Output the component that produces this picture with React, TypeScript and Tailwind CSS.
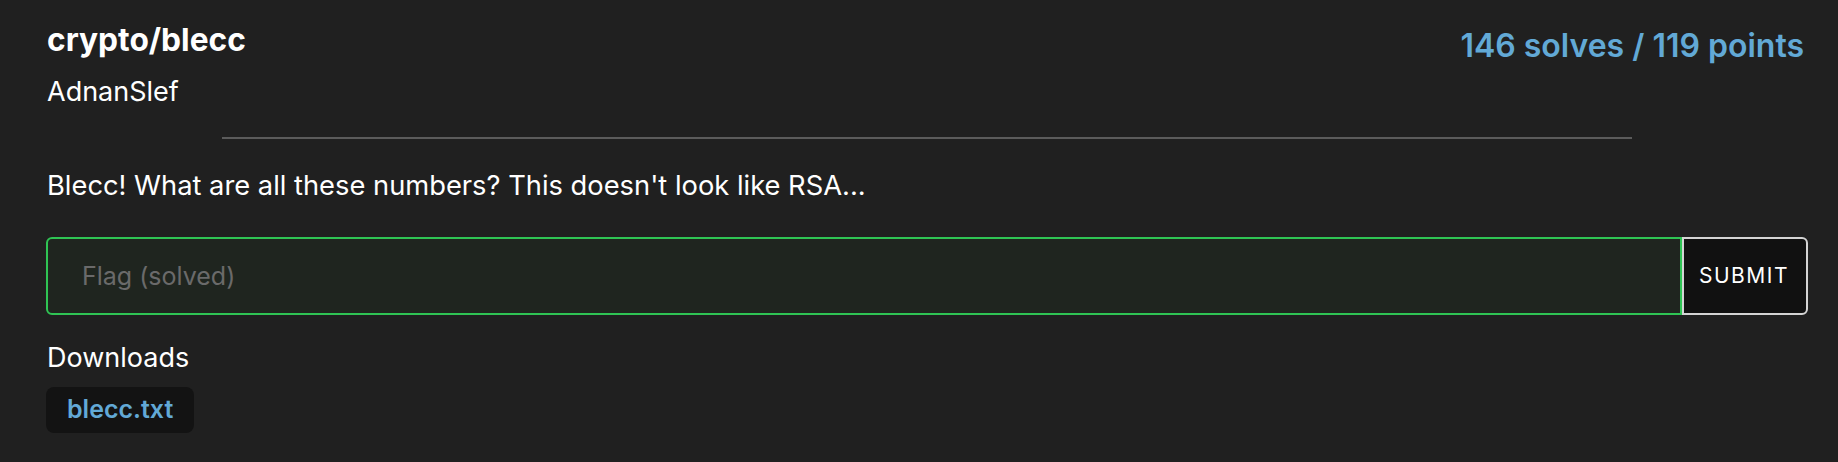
import React from "react";

export default function App() {
  return (
    <div className="min-h-screen w-full bg-[#202020] pl-[46px] pr-[30px] pt-[22px] font-['Inter','Noto_Sans',sans-serif] text-white">
      <div className="flex items-start justify-between">
        <div className="flex flex-col">
          <h1 className="text-[31.7px] font-bold leading-[36px] pl-px">crypto/blecc</h1>
          <div className="mt-[18px] text-[27px] leading-[32px] pl-px">AdnanSlef</div>
        </div>
        <div className="mt-[6px] mr-[4px] text-[32px] font-semibold leading-[36px] text-[#62a9d6]">
          146 solves / 119 points
        </div>
      </div>
      <div className="mx-auto mt-[29px] h-[2px] w-4/5 bg-[#5b5b5b]" />
      <p className="mt-[29px] text-[27.3px] leading-[36px] pl-px">
        Blecc! What are all these numbers? This doesn't look like RSA...
      </p>
      <form className="mt-[33px] flex h-[78px]" onSubmit={(e) => e.preventDefault()}>
        <input
          type="text"
          placeholder="Flag (solved)"
          className="h-full flex-1 rounded-l-[6px] border-2 border-[#2fc454] bg-[#1f251f] pl-[34px] text-[25px] text-white placeholder:text-[#6a6a6a] outline-none"
        />
        <button
          type="submit"
          className="h-full rounded-r-[6px] border-2 border-[#d4d4d4] bg-[#111111] pl-[15px] pr-[17px] text-[21px] uppercase tracking-[1.5px] text-white"
        >
          Submit
        </button>
      </form>
      <div className="mt-[27px] text-[27px] leading-[32px] pl-px">Downloads</div>
      <div className="mt-[13px] flex">
        <a
          href="#"
          className="flex h-[46px] items-center rounded-[8px] bg-[#131313] px-[21px] text-[25px] font-semibold text-[#62a9d6]"
        >
          blecc.txt
        </a>
      </div>
    </div>
  );
}
